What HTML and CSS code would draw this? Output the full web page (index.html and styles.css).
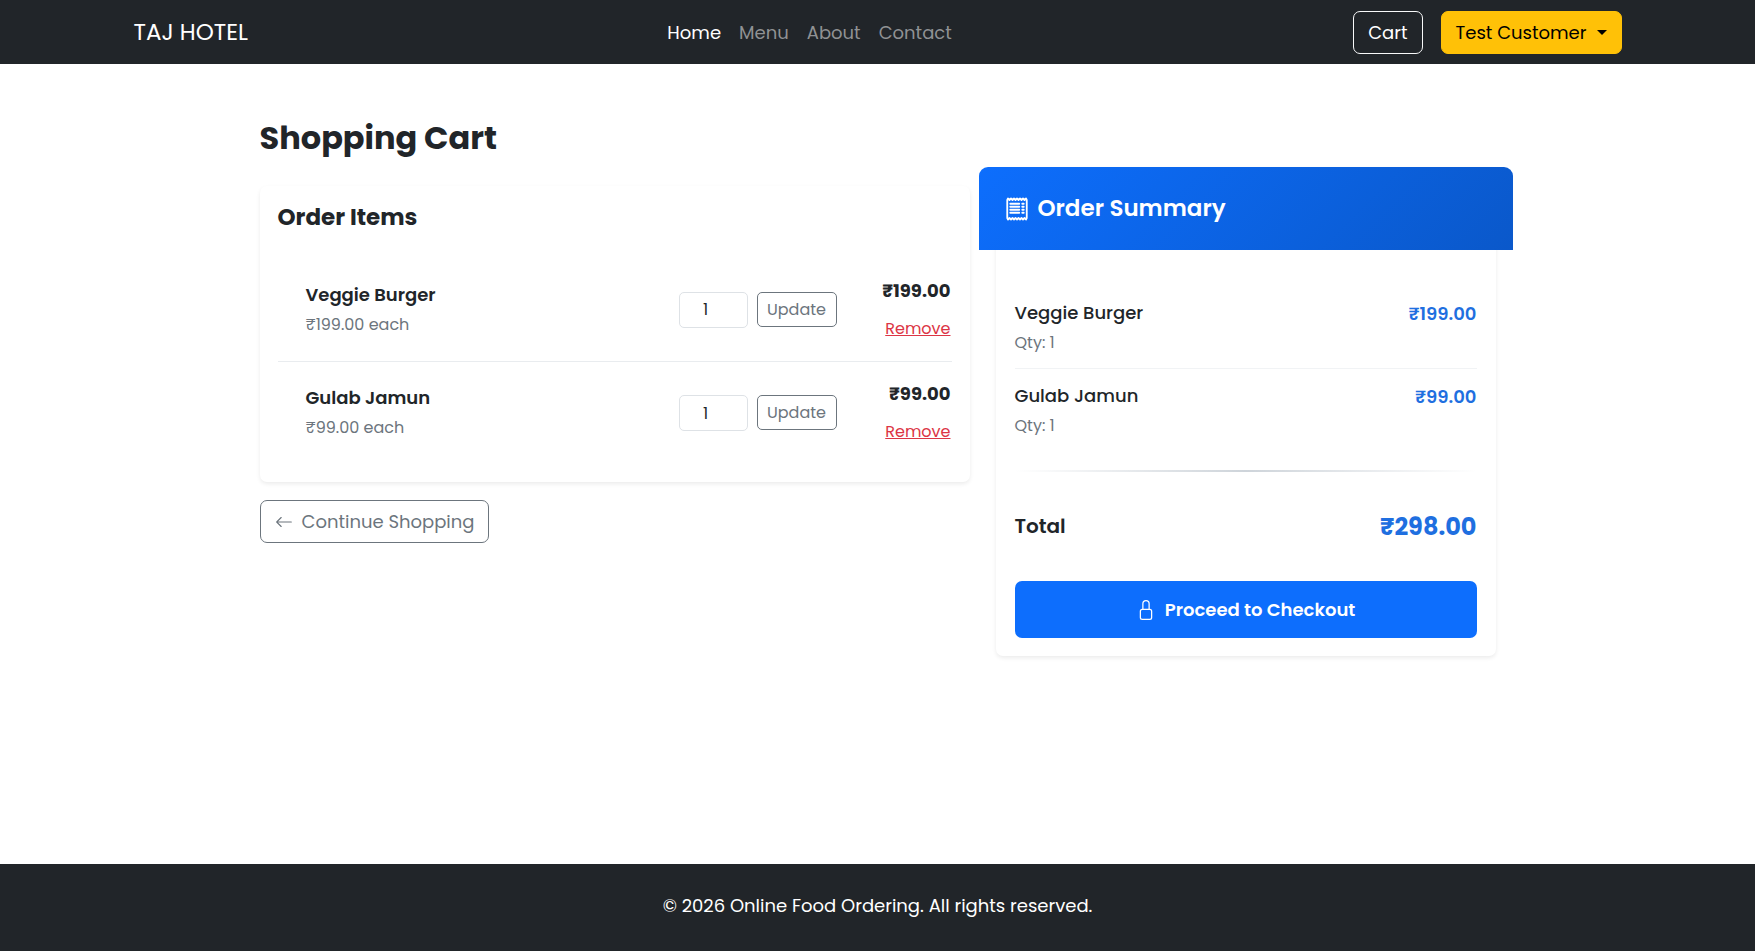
FILE: index.html
```
<!DOCTYPE html>
<html lang="en">
<head>
    <meta charset="UTF-8">
    <meta name="viewport" content="width=device-width, initial-scale=1.0">
    <title>Shopping Cart - TAJ HOTEL</title>
    <link rel="stylesheet" href="styles.css">
</head>
<body>

    <!-- Navbar -->
    <header class="navbar">
        <div class="navbar-inner">
            <a class="brand" href="#">TAJ HOTEL</a>
            <nav class="nav-links">
                <a class="active" href="#">Home</a>
                <a href="#">Menu</a>
                <a href="#">About</a>
                <a href="#">Contact</a>
            </nav>
            <div class="nav-actions">
                <a class="btn btn-outline-light" href="#">Cart</a>
                <button class="btn btn-warning" type="button">Test Customer <span class="caret"></span></button>
            </div>
        </div>
    </header>

    <main class="container">
        <!-- Cart items -->
        <section class="cart">
            <h1>Shopping Cart</h1>
            <div class="card">
                <h2>Order Items</h2>
                <div class="cart-item">
                    <div class="item-info">
                        <h3>Veggie Burger</h3>
                        <p>₹199.00 each</p>
                    </div>
                    <form class="item-qty">
                        <input type="number" value="1" min="1" aria-label="Veggie Burger quantity">
                        <button class="btn-update" type="button">Update</button>
                    </form>
                    <div class="item-total">
                        <strong>₹199.00</strong>
                        <a href="#">Remove</a>
                    </div>
                </div>
                <div class="cart-item">
                    <div class="item-info">
                        <h3>Gulab Jamun</h3>
                        <p>₹99.00 each</p>
                    </div>
                    <form class="item-qty">
                        <input type="number" value="1" min="1" aria-label="Gulab Jamun quantity">
                        <button class="btn-update" type="button">Update</button>
                    </form>
                    <div class="item-total">
                        <strong>₹99.00</strong>
                        <a href="#">Remove</a>
                    </div>
                </div>
            </div>
            <a class="btn btn-outline" href="#">
                <svg width="18" height="18" viewBox="0 0 16 16" fill="currentColor" aria-hidden="true"><path d="M15 8a.5.5 0 0 0-.5-.5H2.707l3.147-3.146a.5.5 0 1 0-.708-.708l-4 4a.5.5 0 0 0 0 .708l4 4a.5.5 0 0 0 .708-.708L2.707 8.5H14.5A.5.5 0 0 0 15 8z"/></svg>
                Continue Shopping
            </a>
        </section>

        <!-- Order summary -->
        <aside class="summary">
            <div class="summary-header">
                <svg width="24" height="24" viewBox="0 0 16 16" fill="none" stroke="currentColor" stroke-width="1.2" stroke-linecap="round" stroke-linejoin="round" aria-hidden="true">
                    <path d="M1.5 2l.5-1 1 1 1-1 1 1 1-1 1 1 1-1 1 1 1-1 1 1 1-1 1 1 1-1 .5 1v12l-.5 1-1-1-1 1-1-1-1 1-1-1-1 1-1-1-1 1-1-1-1 1-1-1-1 1-.5-1z"/>
                    <path d="M3.5 4.5h6M3.5 6.5h6M3.5 8.5h6M3.5 10.5h6M11.500 4.5h1M11.500 6.5h1M11.500 8.5h1M11.500 10.5h1"/>
                </svg>
                <h2>Order Summary</h2>
            </div>
            <div class="summary-body">
                <div class="summary-item">
                    <div>
                        <h3>Veggie Burger</h3>
                        <p>Qty: 1</p>
                    </div>
                    <span class="price">₹199.00</span>
                </div>
                <div class="summary-item">
                    <div>
                        <h3>Gulab Jamun</h3>
                        <p>Qty: 1</p>
                    </div>
                    <span class="price">₹99.00</span>
                </div>
                <hr>
                <div class="summary-total">
                    <span>Total</span>
                    <strong>₹298.00</strong>
                </div>
                <button class="btn-checkout" type="button">
                    <svg width="20" height="20" viewBox="0 0 16 16" fill="currentColor" aria-hidden="true"><path d="M8 1a2 2 0 0 1 2 2v4H6V3a2 2 0 0 1 2-2zm3 6V3a3 3 0 0 0-6 0v4a2 2 0 0 0-2 2v5a2 2 0 0 0 2 2h6a2 2 0 0 0 2-2V9a2 2 0 0 0-2-2zM5 8h6a1 1 0 0 1 1 1v5a1 1 0 0 1-1 1H5a1 1 0 0 1-1-1V9a1 1 0 0 1 1-1z"/></svg>
                    Proceed to Checkout
                </button>
            </div>
        </aside>
    </main>

    <footer class="footer">
        <p>© 2026 Online Food Ordering. All rights reserved.</p>
    </footer>

</body>
</html>
```
FILE: styles.css
```
* { box-sizing: border-box; }
body { font-family: Poppins, Inter, sans-serif; font-size: 18px; line-height: 27px; color: #212529; background: #fff; margin: 0; min-height: 100vh; display: flex; flex-direction: column; }
h1, h2, h3, p { margin: 0; }
button, input { font-family: inherit; color: inherit; }

/* Navbar */
.navbar { background: #212529; padding: 11px 18px 10px; }
.navbar-inner { max-width: 1488px; margin: 0 auto; display: flex; align-items: center; justify-content: space-between; }
.brand { font-size: 23px; color: #fff; text-decoration: none; margin-right: 18px; }
.nav-links { display: flex; }
.nav-links a { padding: 0 9px; color: #909294; text-decoration: none; }
.nav-links .active { color: #fff; }
.nav-actions { display: flex; gap: 18px; }

/* Buttons */
.btn { display: inline-flex; align-items: center; height: 43px; padding: 0 14px; font-size: 18px; border: 1px solid transparent; border-radius: 7px; text-decoration: none; }
.btn-outline-light { color: #fff; border-color: #f8f9fa; }
.btn-warning { color: #000; background: #ffc107; border-color: #ffc107; }
.btn-outline { color: #6c757d; border-color: #6c757d; gap: 9px; margin-top: 18px; }
.caret { margin-left: 10px; border-top: 5px solid; border-left: 5px solid transparent; border-right: 5px solid transparent; }

/* Layout */
.container { width: 100%; max-width: 1236px; margin: 0 auto; display: grid; grid-template-columns: 71fr 50fr; gap: 26px; align-items: start; flex: 1; }
.cart { padding-top: 54px; }
h1 { font-size: 32px; line-height: 40px; margin-bottom: 28px; }

/* Cart card */
.card { padding: 9px 18px 18px; border-radius: 7px; box-shadow: 0 2px 4px rgba(0, 0, 0, 0.08); }
.card h2 { font-size: 23px; line-height: 28px; font-weight: 700; margin: 8px 0 27px; }
.cart-item { display: flex; align-items: center; height: 103px; padding-left: 28px; padding-right: 1px; }
.cart-item + .cart-item { border-top: 1px solid #e9ecef; }
.item-info { flex: 1; }
h3 { font-size: 18px; line-height: 30px; font-weight: 600; }
.item-info p { font-size: 16px; line-height: 30px; color: #6c757d; }
.item-qty { display: flex; gap: 9px; }
.item-qty input { width: 69px; height: 36px; padding: 0 9px; font-size: 16px; text-align: center; border: 1px solid #dee2e6; border-radius: 5px; background: #fff; }
.btn-update { width: 80px; height: 35px; padding: 0; font-size: 16px; color: #6c757d; background: none; border: 1px solid #6c757d; border-radius: 5px; }
.item-total { width: 114px; text-align: right; }
.item-total strong { display: block; font-weight: 700; line-height: 38px; }
.item-total a { font-size: 16px; line-height: 38px; color: #dc3545; }

/* Order summary */
.summary { margin-top: 103px; border-radius: 7px; box-shadow: 0 2px 4px rgba(0, 0, 0, 0.08); }
.summary-header { display: flex; align-items: center; gap: 9px; height: 83px; margin: 0 -17px; padding: 0 26px; color: #fff; background: linear-gradient(135deg, #0d6efd, #0a58ca); border-radius: 9px 9px 0 0; }
.summary-header h2 { font-size: 23px; font-weight: 600; }
.summary-body { padding: 36px 19px 18px; }
.summary-item { display: flex; justify-content: space-between; height: 82px; padding: 12px 0; }
.summary-item + .summary-item { border-top: 1px solid #f1f3f5; }
.summary-item h3 { font-weight: 500; }
.summary-item p { font-size: 16px; line-height: 30px; color: #6c757d; }
.price { font-weight: 600; line-height: 32px; color: #1f6fe0; }
hr { height: 2px; margin: 20px 0 35px; border: 0; background: linear-gradient(90deg, transparent, #ced4da, transparent); }
.summary-total { display: flex; justify-content: space-between; align-items: center; height: 38px; font-size: 20px; font-weight: 600; }
.summary-total strong { font-size: 24px; font-weight: 700; color: #1f6fe0; }
.btn-checkout { display: flex; align-items: center; justify-content: center; gap: 9px; width: 100%; height: 57px; margin-top: 36px; font-size: 18px; font-weight: 600; color: #fff; background: #0d6efd; border: 0; border-radius: 7px; }

/* Footer */
.footer { background: #212529; color: #fff; text-align: center; padding: 28px 18px 32px; }
```
